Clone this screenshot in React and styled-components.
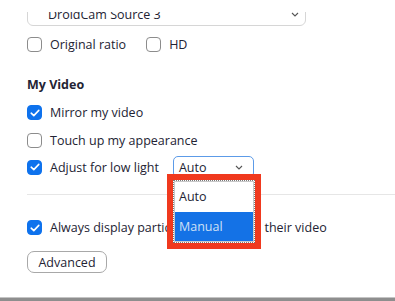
import styled, { createGlobalStyle } from 'styled-components';

const GlobalStyle = createGlobalStyle`
  body {
    margin: 0;
    background: #fff;
    font-family: 'Open Sans', 'Noto Sans', sans-serif;
    color: #232333;
  }
`;

function CheckIcon() {
  return (
    <svg width="10" height="8" viewBox="0 0 10 8">
      <path d="M1.2 4.2 L3.8 6.6 L8.8 1.4" fill="none" stroke="#fff" strokeWidth="1.6" strokeLinecap="round" strokeLinejoin="round" />
    </svg>
  );
}

function Chevron() {
  return (
    <svg width="8" height="5" viewBox="0 0 8 5">
      <path d="M1 1 L4 4 L7 1" fill="none" stroke="#555" strokeWidth="1.1" />
    </svg>
  );
}

function Checkbox({ checked, label }) {
  return (
    <Item>
      <Box checked={checked}>{checked && <CheckIcon />}</Box>
      <Label>{label}</Label>
    </Item>
  );
}

export default function App() {
  return (
    <>
      <GlobalStyle />
      <Page>
        <Clip>
          <CameraSelect>
            <span>DroidCam Source 3</span>
            <Chevron />
          </CameraSelect>
        </Clip>
        <Row top={11} gap={20}>
          <Checkbox label="Original ratio" />
          <Checkbox label="HD" />
        </Row>
        <Heading>My Video</Heading>
        <Row top={12}>
          <Checkbox checked label="Mirror my video" />
        </Row>
        <Row top={13}>
          <Checkbox label="Touch up my appearance" />
        </Row>
        <Row top={8} gap={14} height={22}>
          <Checkbox checked label="Adjust for low light" />
          <SmallSelect>
            <span>Auto</span>
            <Chevron />
          </SmallSelect>
        </Row>
        <Divider />
        <Row top={25}>
          <Checkbox checked label="Always display participant names on their video" />
        </Row>
        <Button>Advanced</Button>
        <Popup>
          <Options>
            <Option>Auto</Option>
            <Option selected>Manual</Option>
          </Options>
        </Popup>
      </Page>
      <BottomBar />
    </>
  );
}

const Page = styled.div`
  position: relative;
  height: 297px;
  padding-left: 27px;
  box-sizing: border-box;
  overflow: hidden;
  font-size: 12.5px;
`;

const Clip = styled.div`
  margin-top: 12px;
  height: 14px;
  overflow: hidden;
`;

const CameraSelect = styled.div`
  margin-top: -14px;
  width: 279px;
  height: 28px;
  box-sizing: border-box;
  border: 1px solid #d6d6d6;
  border-radius: 6px;
  display: flex;
  align-items: center;
  justify-content: space-between;
  padding: 4px 6px 0 20px;
  color: #232333;
`;

const Row = styled.div`
  display: flex;
  align-items: center;
  gap: ${({ gap }) => gap || 0}px;
  margin-top: ${({ top }) => top}px;
  height: ${({ height }) => height || 15}px;
`;

const Item = styled.label`
  display: flex;
  align-items: center;
  gap: 8px;
`;

const Box = styled.span`
  width: 15px;
  height: 15px;
  box-sizing: border-box;
  border-radius: 4px;
  display: flex;
  align-items: center;
  justify-content: center;
  background: ${({ checked }) => (checked ? '#0e72ed' : '#fff')};
  border: 1px solid ${({ checked }) => (checked ? '#0e72ed' : '#8c8c8c')};
`;

const Label = styled.span`
  font-size: 12.5px;
  color: #232333;
  white-space: nowrap;
`;

const Heading = styled.div`
  margin-top: 25px;
  font-weight: 700;
  font-size: 12.5px;
  line-height: 16px;
  color: #232333;
`;

const SmallSelect = styled.div`
  width: 81px;
  height: 22px;
  box-sizing: border-box;
  border: 1px solid #5c9be8;
  border-radius: 5px;
  display: flex;
  align-items: center;
  justify-content: space-between;
  padding: 0 10px 0 5px;
  font-size: 12.5px;
`;

const Divider = styled.div`
  margin-top: 16px;
  height: 1px;
  background: #e6e6e6;
`;

const Button = styled.div`
  margin-top: 16px;
  width: 80px;
  height: 22px;
  box-sizing: border-box;
  border: 1px solid #a8a8a8;
  border-radius: 7px;
  display: flex;
  align-items: center;
  justify-content: center;
  font-size: 12.5px;
  color: #232333;
`;

const Popup = styled.div`
  position: absolute;
  left: 167px;
  top: 174px;
  width: 94px;
  height: 75px;
  box-sizing: border-box;
  border: 5px solid #f0391e;
  background: #f0391e;
  padding: 1px;
`;

const Options = styled.div`
  height: 100%;
  box-sizing: border-box;
  background: #fff;
  border: 1px dotted #7a7a7a;
  box-shadow: inset 0 0 0 1px #c8c8c8;
  display: flex;
  flex-direction: column;
  padding: 1px;
`;

const Option = styled.div`
  flex: 1;
  display: flex;
  align-items: center;
  padding-left: 4px;
  font-size: 12.5px;
  background: ${({ selected }) => (selected ? '#1472e6' : '#fff')};
  color: ${({ selected }) => (selected ? '#cfe0f5' : '#232333')};
`;

const BottomBar = styled.div`
  height: 4px;
  background: #8e8e8e;
  border-top: 1px solid #c4c4c4;
  box-sizing: border-box;
`;
